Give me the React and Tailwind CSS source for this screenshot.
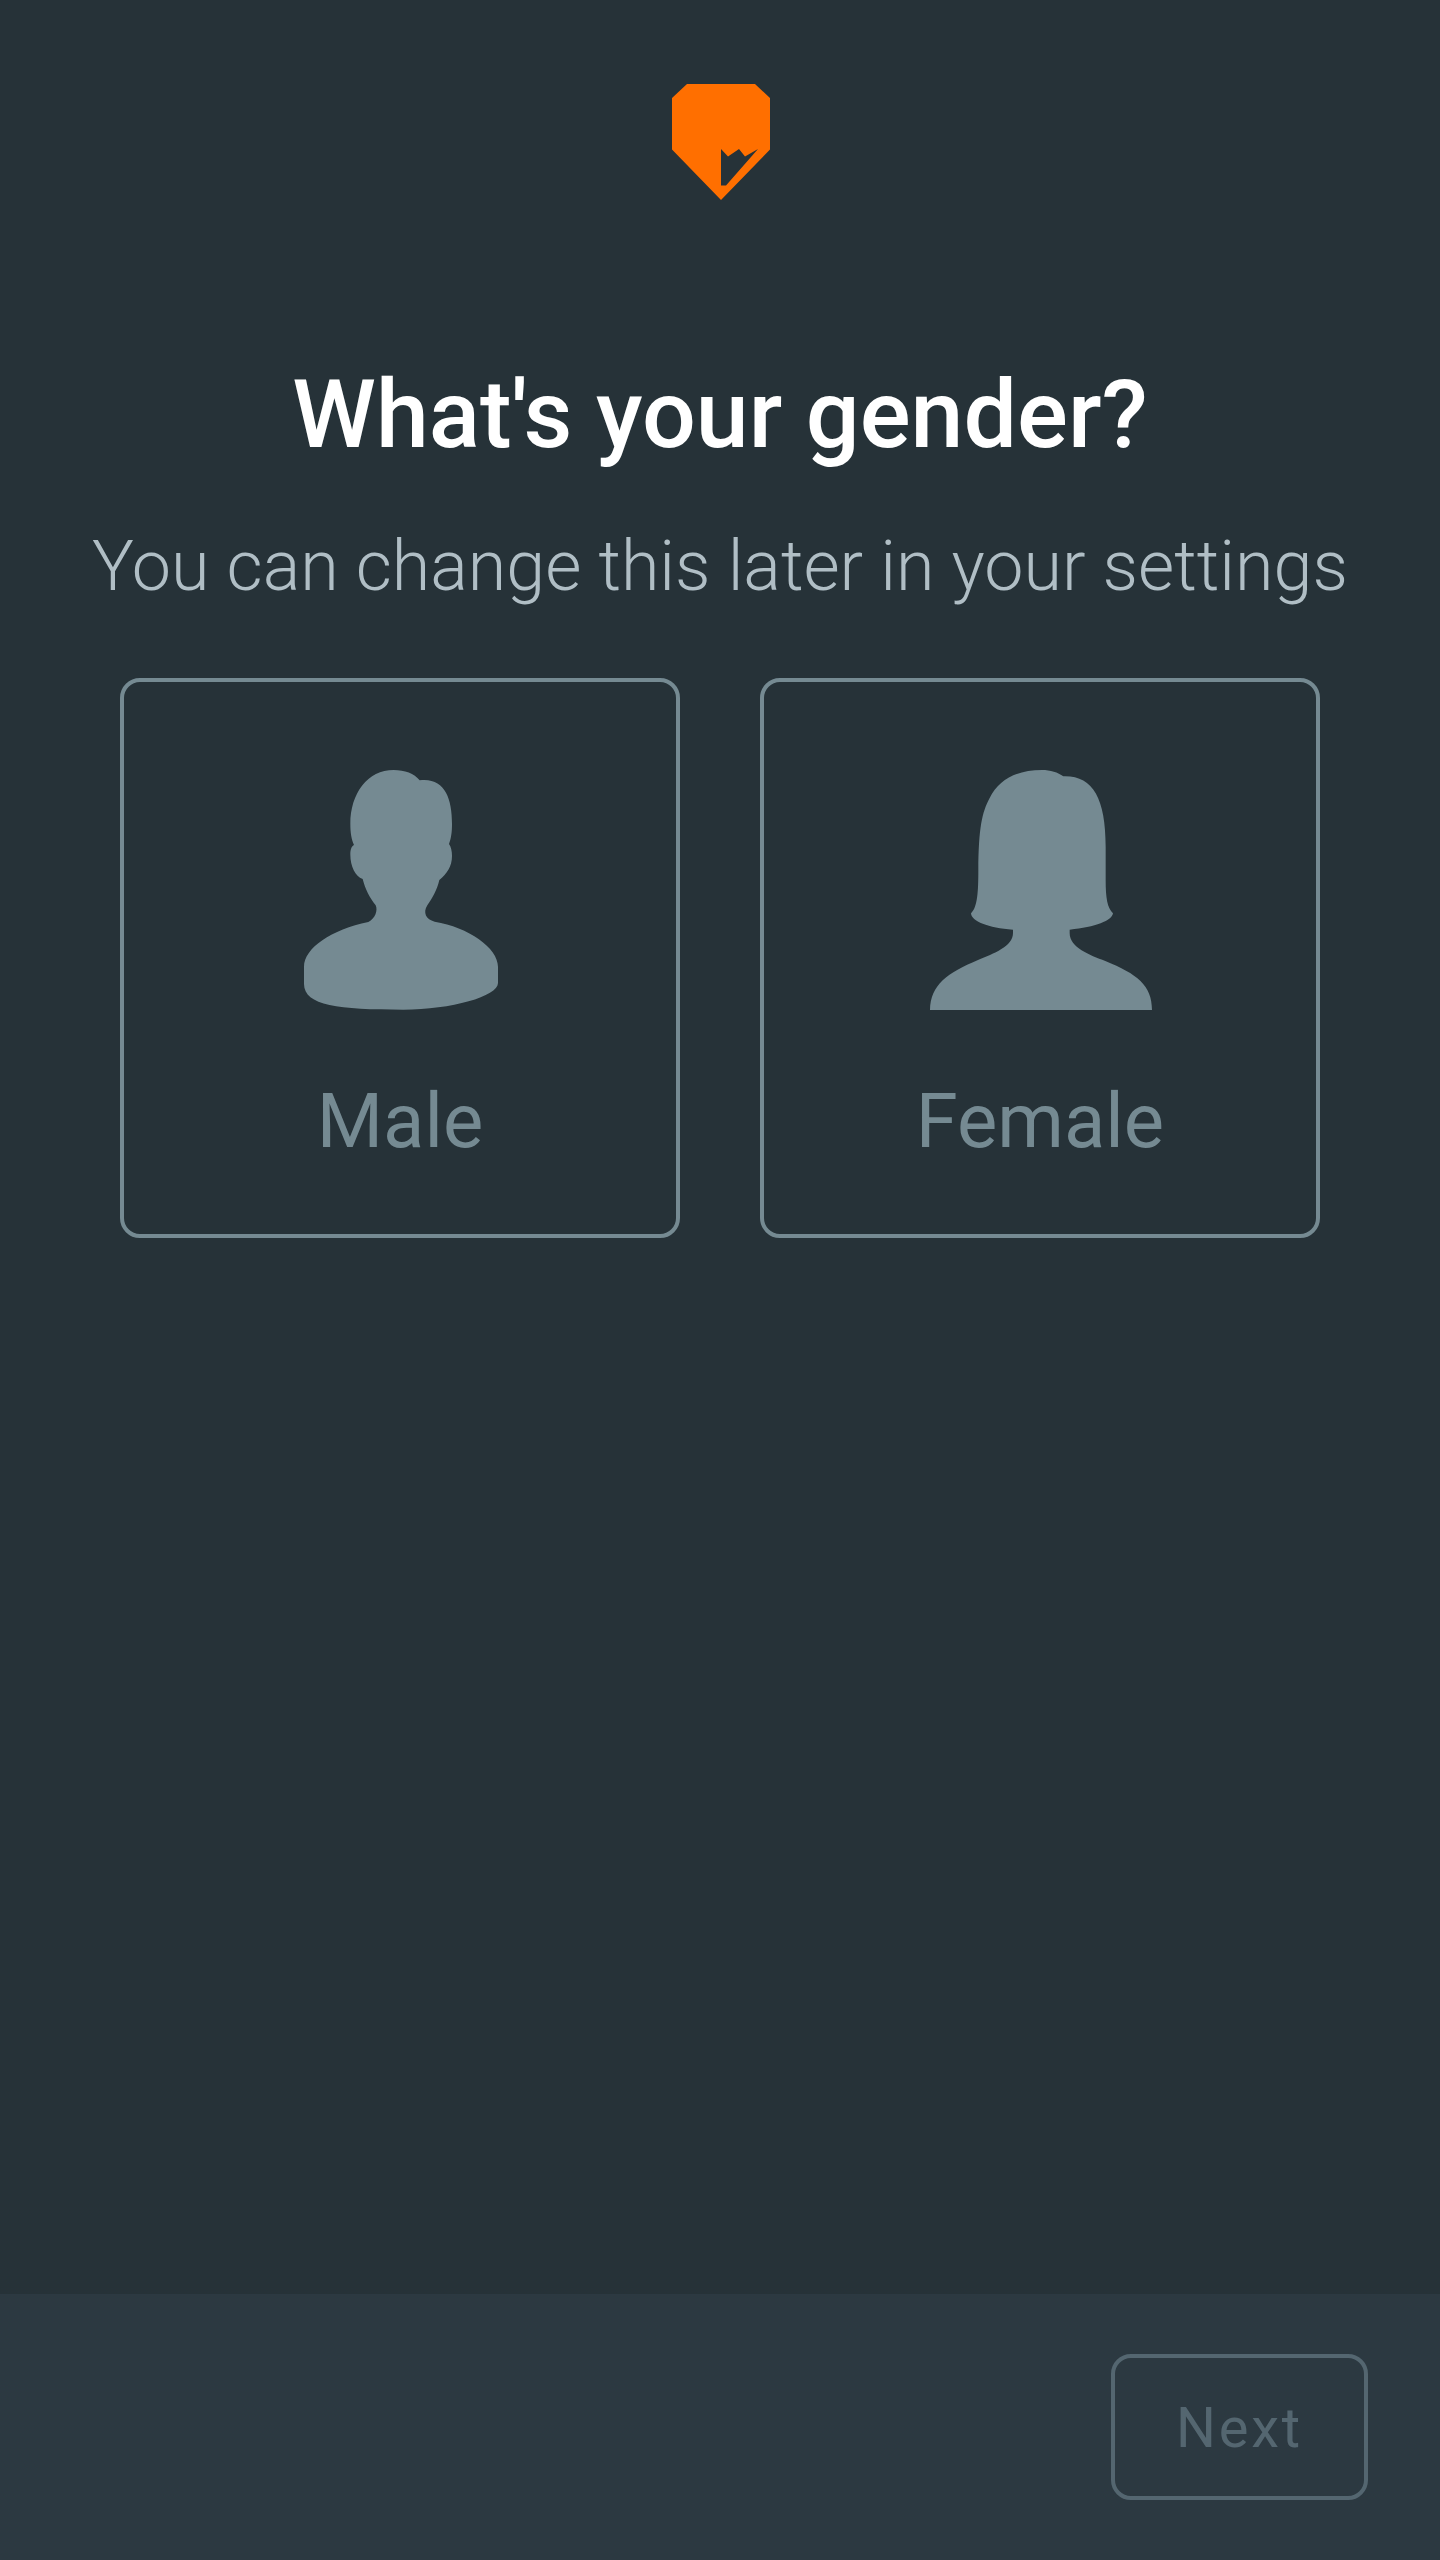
import { useState } from "react";

function Logo() {
  return (
    <svg viewBox="-2 0 100 116" className="h-[116px] w-[100px] fill-[#ff6f00]" role="img" aria-label="Logo">
      <path
        fillRule="evenodd"
        d="M15 0H83L98 14V65.500L49 116L0 65.500V14ZM49 65L56 72.500L67 65L73 72.500L86 65L54 101.500H49Z"
      />
    </svg>
  );
}

function MaleIcon() {
  return (
    <svg viewBox="36 60 588 720" className="h-60 w-[196px] fill-current" aria-hidden="true">
      <path d="M311 60C344 60 373 70 389 91C463 82 486 143 486 222C486 248 483 265 477 282C483 290 486 304 486 318C486 350 470 372 448 390C441 421 427 444 412 466C398 488 408 509 434 515C535 531 624 594 624 650V699C624 739 484 779 340 779C147 779 42 767 42 702V650C42 594 125 539 235 516C256 506 264 481 257 466C240 445 225 416 218 387C196 379 181 349 181 314C181 298 185 288 192 285C184 267 181 248 181 222C181 130 233 60 311 60Z" />
    </svg>
  );
}

function FemaleIcon() {
  return (
    <svg viewBox="54 60 672 720" className="h-60 w-[224px] fill-current" aria-hidden="true">
      <path d="M396 60C421 60 444 67 460 79C548 76 587 144 587 290V390C587 445 592 473 609 490C607 511 556 532 479 539V549C479 593 539 615 586 633C681 672 726 705 726 780H60C62 704 112 669 204 630C251 611 309 589 309 549V539C235 534 184 514 183 490C203 472 205 423 205 360C206 234 216 187 239 144C266 90 319 60 396 60Z" />
    </svg>
  );
}

const options = [
  { value: "male", label: "Male", Icon: MaleIcon },
  { value: "female", label: "Female", Icon: FemaleIcon },
];

export default function App() {
  const [gender, setGender] = useState(null);

  return (
    <div className="flex min-h-screen flex-col bg-[#263238] font-['Roboto',sans-serif]">
      <header className="flex justify-center pt-[84px]">
        <Logo />
      </header>

      <main className="flex flex-1 flex-col pt-[159px] text-center">
        <h1 className="text-[95px] leading-[112px] font-medium text-white">What's your gender?</h1>
        <p className="mt-[53px] text-[70px] leading-[84px] font-light text-[#b0bec5]">
          You can change this later in your settings
        </p>
        <div className="mt-[70px] grid grid-cols-2 gap-20 px-[120px]">
          {options.map(({ value, label, Icon }) => (
            <button
              key={value}
              type="button"
              aria-pressed={gender === value}
              onClick={() => setGender(value)}
              className="flex aspect-square flex-col items-center rounded-[20px] border-4 border-[#758a92] pt-[88px] text-[#758a92] aria-pressed:border-[#ff6f00] aria-pressed:text-[#ff6f00]"
            >
              <Icon />
              <span className="mt-[67px] text-[76px] leading-[88px]">{label}</span>
            </button>
          ))}
        </div>
      </main>

      <footer className="flex justify-end bg-[#2c3941] px-[72px] py-[60px]">
        <button
          type="button"
          disabled={!gender}
          className="rounded-[20px] border-4 border-[#546670] px-[61px] pt-[38px] pb-[36px] text-[56px] leading-[64px] tracking-wider text-[#546670]"
        >
          Next
        </button>
      </footer>
    </div>
  );
}
